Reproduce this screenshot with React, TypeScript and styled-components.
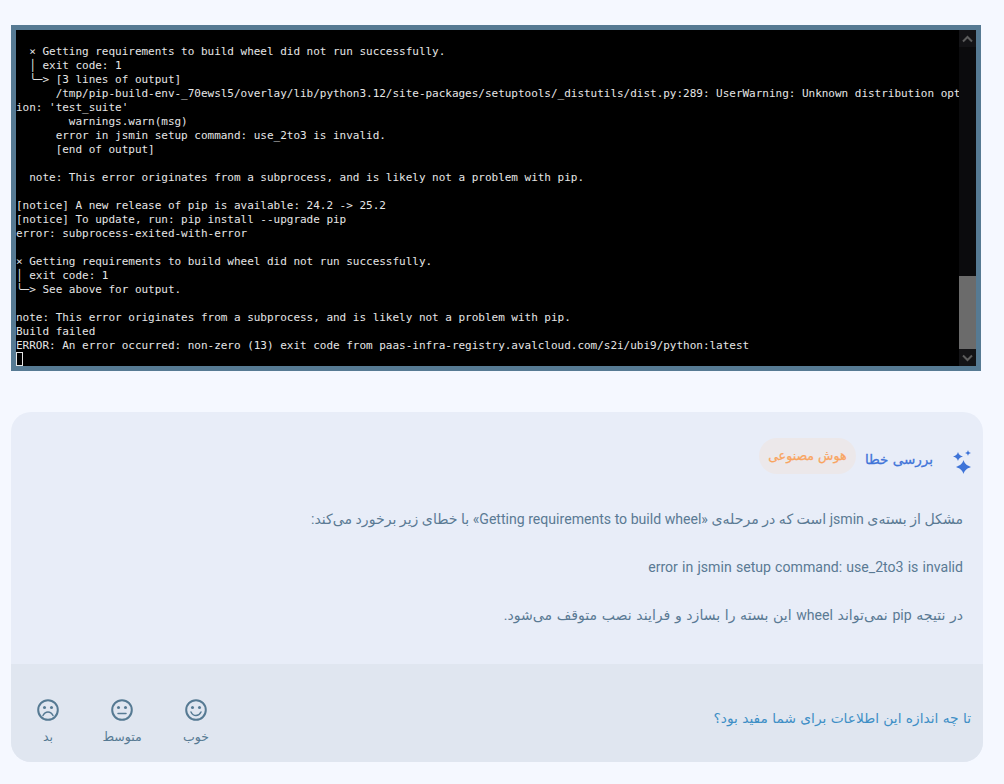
import React from "react";
import styled, { createGlobalStyle } from "styled-components";

const Global = createGlobalStyle`
  html, body { margin: 0; padding: 0; background: #f5f8ff; }
  body { width: 1004px; height: 784px; overflow: hidden; }
`;

const Page = styled.div`
  display: flex;
  flex-direction: column;
  gap: 41px;
  padding: 25px 21px 0 11px;
`;

const Terminal = styled.div`
  display: flex;
  width: 960px;
  height: 336px;
  border: 5px solid #567a93;
  background: #000;
`;

const Screen = styled.pre`
  flex: 1;
  margin: 0;
  padding: 15px 0 0;
  min-width: 0;
  color: #e6e6e6;
  font: 11px/14px "DejaVu Sans Mono", monospace;
  letter-spacing: -0.018px;
`;

const Cursor = styled.span`
  display: block;
  width: 5px;
  height: 12px;
  margin-top: -1px;
  border: 1px solid #e6e6e6;
`;

const ScrollBar = styled.div`
  display: flex;
  flex-direction: column;
  flex: none;
  width: 17px;
  background: #0b0b0d;
`;

const ScrollButton = styled.div`
  display: flex;
  align-items: center;
  justify-content: center;
  height: 17px;
  background: #131316;
`;

const ScrollSpace = styled.div`
  flex: 1;
`;

const ScrollThumb = styled.div`
  height: 73px;
  background: #6b6b6b;
`;

const Card = styled.section`
  direction: rtl;
  display: flex;
  flex-direction: column;
  width: 972px;
  height: 350px;
  overflow: hidden;
  border-radius: 20px;
  background: #e8edf8;
  font-family: Roboto, "DejaVu Sans", sans-serif;
`;

const CardBody = styled.div`
  flex: 1;
  padding: 26px 20px 0;
`;

const Header = styled.header`
  display: flex;
  align-items: center;
  gap: 9px;
  height: 36px;
  margin: 0 -8px 35px 0;
`;

const IconSlot = styled.span`
  display: flex;
  margin-top: 12px;
`;

const Title = styled.h2`
  margin: 5px 11px 0 0;
  color: #3f74d8;
  font: 400 13.5px/20px "DejaVu Sans", sans-serif;
  -webkit-text-stroke: 0.3px #3f74d8;
`;

const Pill = styled.span`
  display: flex;
  align-items: center;
  justify-content: center;
  width: 97px;
  height: 36px;
  border-radius: 18px;
  background: #ece8ea;
  color: #f9a45f;
  font: 400 12.6px/16px "DejaVu Sans", sans-serif;
  -webkit-text-stroke: 0.25px #f9a45f;
`;

const Paragraph = styled.p<{ $wordGap?: number }>`
  margin: 0 0 28px;
  color: #5a7a94;
  font-size: 14.1px;
  line-height: 20px;
  word-spacing: ${(p) => p.$wordGap ?? 0}px;
`;

const Footer = styled.footer`
  display: flex;
  align-items: center;
  justify-content: space-between;
  height: 98px;
  padding: 0 12px 0 0;
  background: #e0e6f0;
`;

const Question = styled.span`
  margin-top: 10px;
  color: #3e8fc6;
  font: 13.75px/20px "DejaVu Sans", sans-serif;
`;

const Ratings = styled.div`
  display: flex;
  margin-top: 17px;
`;

const Rating = styled.button`
  display: flex;
  flex-direction: column;
  align-items: center;
  gap: 8px;
  width: 74px;
  padding: 0;
  border: 0;
  background: none;
  color: #567a93;
  font: 12.5px/16px "DejaVu Sans", sans-serif;
`;

const Up = ({ flip }: { flip?: boolean }) => (
  <svg width="11" height="8" viewBox="0 0 11 8" fill="none">
    <path d={flip ? "M1 1.5l4.5 4.5 4.5-4.5" : "M1 6.5l4.5-4.5 4.5 4.5"} stroke="#5c5c5c" strokeWidth="2" />
  </svg>
);

const Sparkles = () => (
  <svg width="18" height="24" viewBox="0 0 18 24" fill="#3f74d8">
    <path d="M10.5 10c1 3.400 2.800 5.200 7.500 7-4.700 1.800-6.500 3.600-7.500 7-1-3.400-2.800-5.200-7.500-7 4.700-1.800 6.500-3.600 7.500-7z" />
    <path d="M5 2c.6 2.300 1.800 3.500 5 4.500-3.200 1-4.400 2.200-5 4.500-.6-2.300-1.800-3.500-5-4.500 3.200-1 4.400-2.200 5-4.500z" />
    <path d="M15 0c.3 1.700.9 2.400 3 3-2.100.6-2.700 1.300-3 3-.3-1.700-.9-2.400-3-3 2.100-.6 2.700-1.300 3-3z" />
  </svg>
);

const Face = ({ mouth }: { mouth: "good" | "mid" | "bad" }) => (
  <svg width="22" height="22" viewBox="0 0 22 22" fill="none" stroke="#567a93" strokeWidth="2" strokeLinecap="round">
    <circle cx="11" cy="11" r="9.800" />
    <circle cx="7.500" cy="8.500" r="1.500" fill="#567a93" stroke="none" />
    <circle cx="14.500" cy="8.500" r="1.500" fill="#567a93" stroke="none" />
    {mouth === "good" && <path d="M6 13c1.300 2.600 3 3.600 5 3.600s3.700-1 5-3.600" strokeWidth="1.500" />}
    {mouth === "mid" && <path d="M7 14.500h8" strokeWidth="1.500" />}
    {mouth === "bad" && <path d="M6 16.500c1.300-2.600 3-3.600 5-3.600s3.700 1 5 3.600" strokeWidth="1.500" />}
  </svg>
);

const log = `  × Getting requirements to build wheel did not run successfully.
  │ exit code: 1
  ╰─> [3 lines of output]
      /tmp/pip-build-env-_70ewsl5/overlay/lib/python3.12/site-packages/setuptools/_distutils/dist.py:289: UserWarning: Unknown distribution opt
ion: 'test_suite'
        warnings.warn(msg)
      error in jsmin setup command: use_2to3 is invalid.
      [end of output]

  note: This error originates from a subprocess, and is likely not a problem with pip.

[notice] A new release of pip is available: 24.2 -> 25.2
[notice] To update, run: pip install --upgrade pip
error: subprocess-exited-with-error

× Getting requirements to build wheel did not run successfully.
│ exit code: 1
╰─> See above for output.

note: This error originates from a subprocess, and is likely not a problem with pip.
Build failed
ERROR: An error occurred: non-zero (13) exit code from paas-infra-registry.avalcloud.com/s2i/ubi9/python:latest`;

export default function App() {
  return (
    <>
      <Global />
      <Page>
        <Terminal>
          <Screen>
            {log}
            <Cursor />
          </Screen>
          <ScrollBar>
            <ScrollButton><Up /></ScrollButton>
            <ScrollSpace />
            <ScrollThumb />
            <ScrollButton><Up flip /></ScrollButton>
          </ScrollBar>
        </Terminal>
        <Card>
          <CardBody>
            <Header>
              <IconSlot><Sparkles /></IconSlot>
              <Title>بررسی خطا</Title>
              <Pill>هوش مصنوعی</Pill>
            </Header>
            <Paragraph>مشکل از بسته‌ی jsmin است که در مرحله‌ی «Getting requirements to build wheel» با خطای زیر برخورد می‌کند:</Paragraph>
            <Paragraph $wordGap={0.7}>error in jsmin setup command: use_2to3 is invalid</Paragraph>
            <Paragraph $wordGap={1.1}>در نتیجه pip نمی‌تواند wheel این بسته را بسازد و فرایند نصب متوقف می‌شود.</Paragraph>
          </CardBody>
          <Footer>
            <Question>تا چه اندازه این اطلاعات برای شما مفید بود؟</Question>
            <Ratings>
              <Rating><Face mouth="good" />خوب</Rating>
              <Rating><Face mouth="mid" />متوسط</Rating>
              <Rating><Face mouth="bad" />بد</Rating>
            </Ratings>
          </Footer>
        </Card>
      </Page>
    </>
  );
}
